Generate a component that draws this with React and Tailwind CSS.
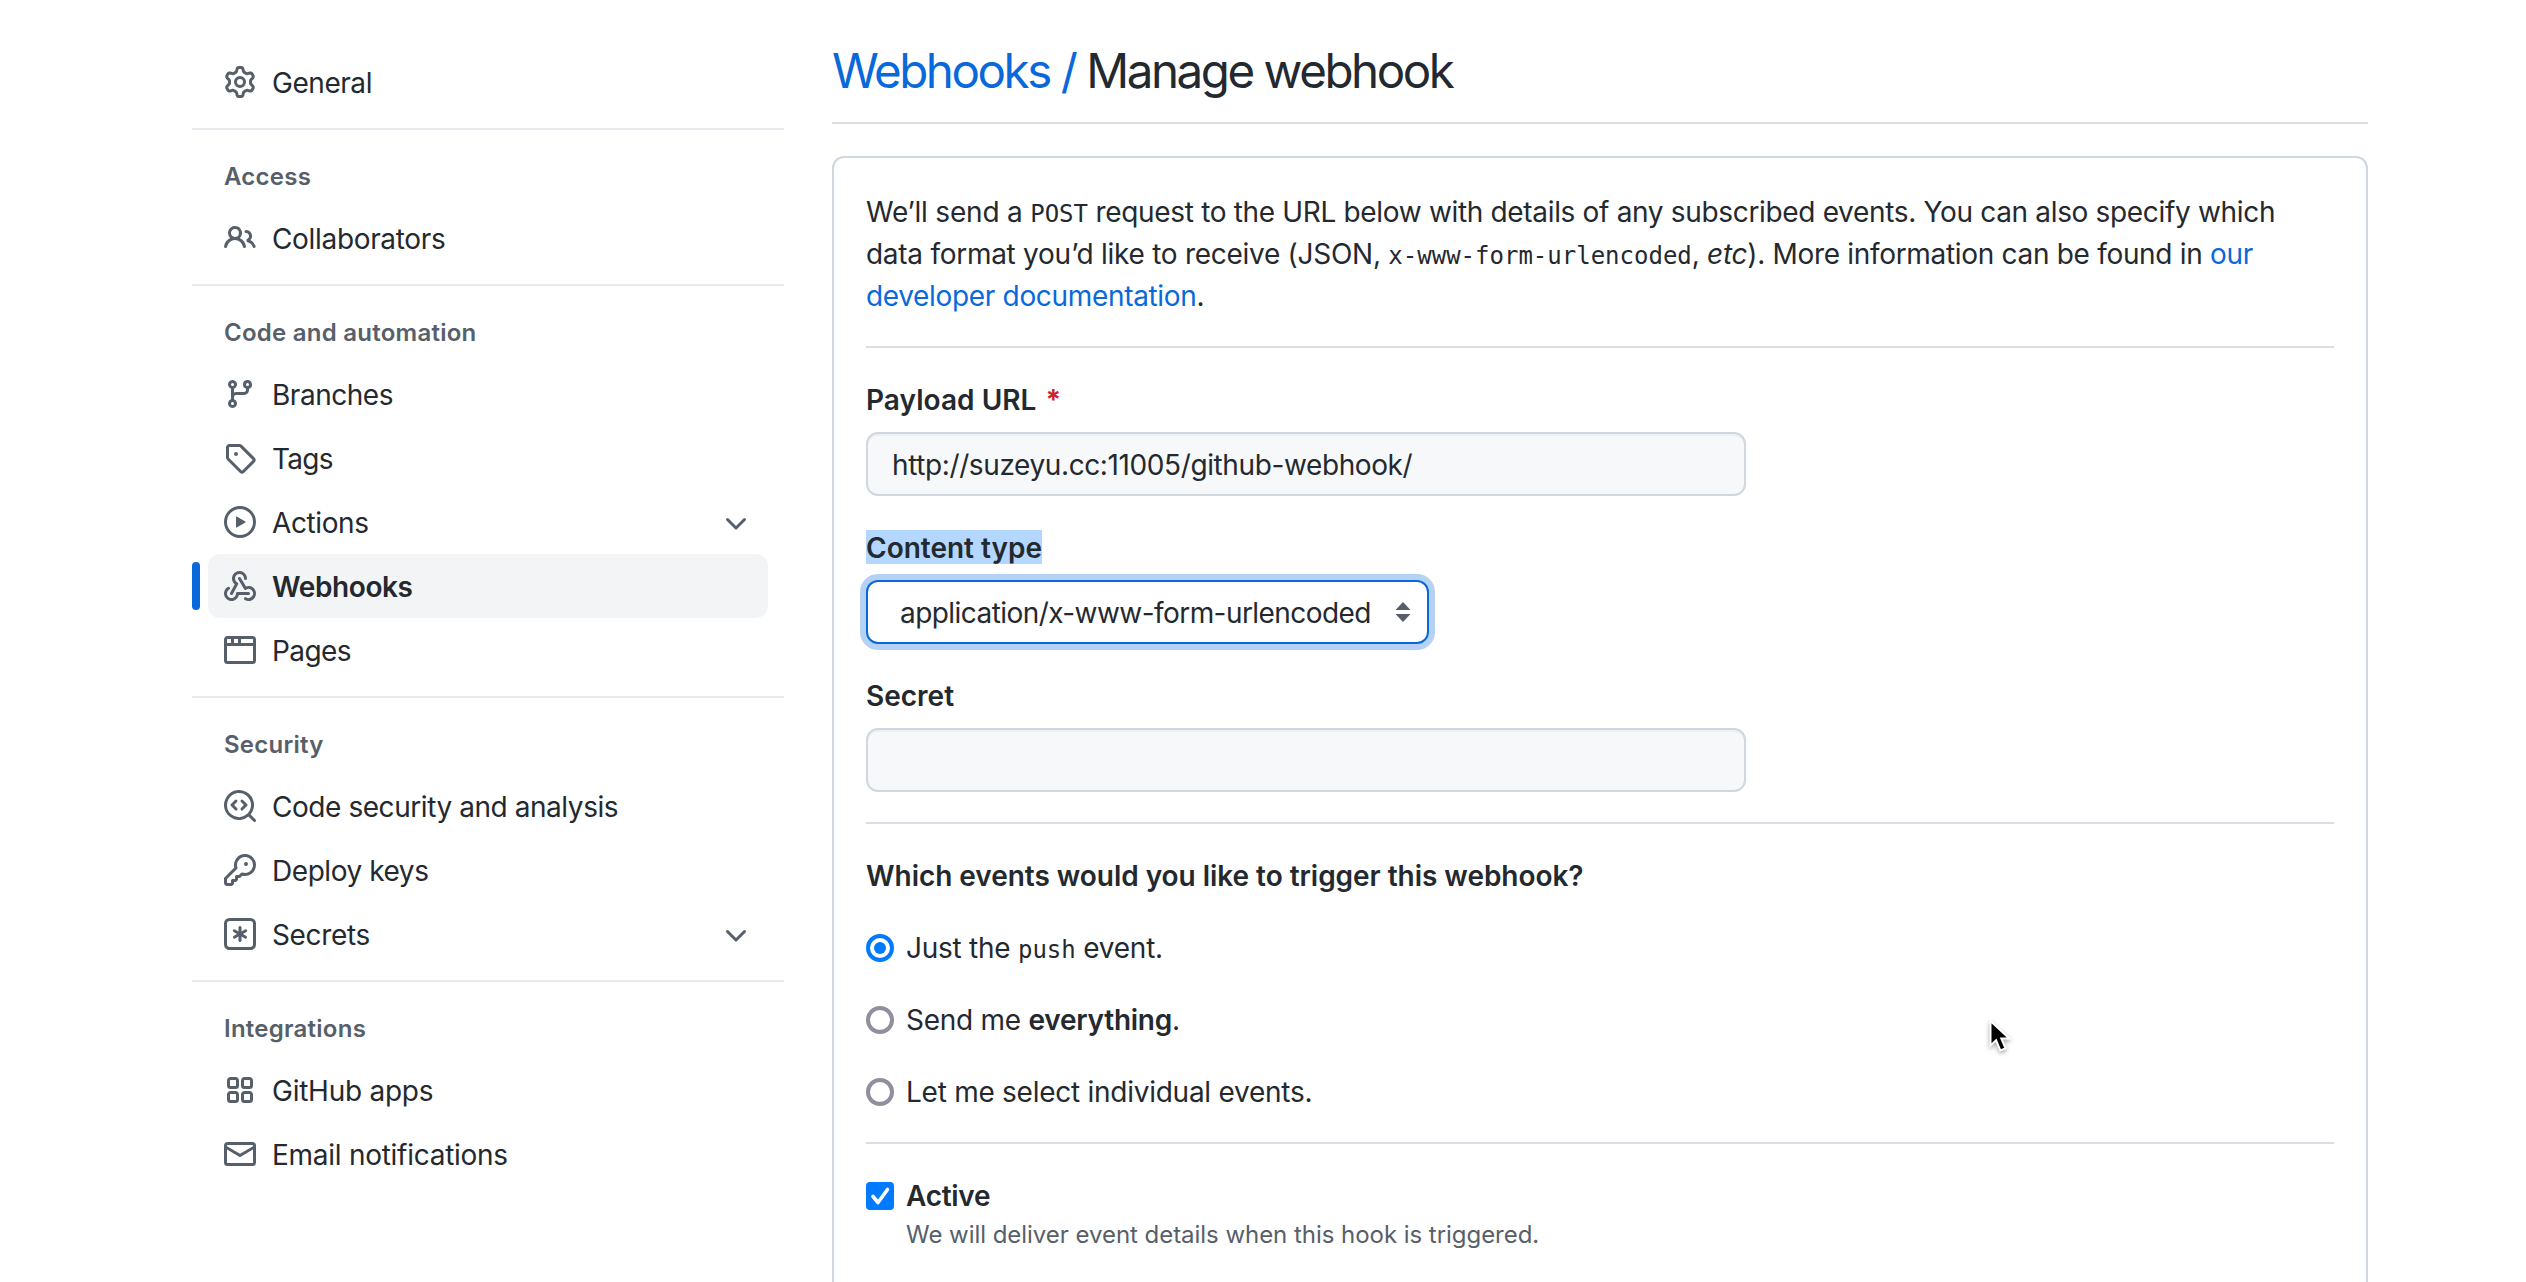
const ICONS = {
  gear: [
    'M8 0a8.2 8.2 0 0 1 .701.031C9.444.095 9.99.645 10.16 1.29l.288 1.107c.018.066.079.158.212.224.231.114.454.243.668.386.123.082.233.09.299.071l1.103-.303c.644-.176 1.392.021 1.82.63.27.385.506.792.704 1.218.315.675.111 1.422-.364 1.891l-.814.806c-.049.048-.098.147-.088.294.016.257.016.515 0 .772-.01.147.038.246.088.294l.814.806c.475.469.679 1.216.364 1.891a7.977 7.977 0 0 1-.704 1.217c-.428.61-1.176.807-1.82.63l-1.102-.302c-.067-.019-.177-.011-.3.071a5.909 5.909 0 0 1-.668.386c-.133.066-.194.158-.211.224l-.29 1.106c-.168.646-.715 1.196-1.458 1.26a8.006 8.006 0 0 1-1.402 0c-.743-.064-1.289-.614-1.458-1.26l-.289-1.106c-.018-.066-.079-.158-.212-.224a5.738 5.738 0 0 1-.668-.386c-.123-.082-.233-.09-.299-.071l-1.103.303c-.644.176-1.392-.021-1.82-.63a8.12 8.12 0 0 1-.704-1.218c-.315-.675-.111-1.422.363-1.891l.815-.806c.05-.048.098-.147.088-.294a6.214 6.214 0 0 1 0-.772c.01-.147-.038-.246-.088-.294l-.815-.806C.635 6.045.431 5.298.746 4.623a7.92 7.92 0 0 1 .704-1.217c.428-.61 1.176-.807 1.82-.63l1.102.302c.067.019.177.011.3-.071.214-.143.437-.272.668-.386.133-.066.194-.158.211-.224l.29-1.106C6.009.645 6.556.095 7.299.03 7.53.01 7.764 0 8 0Zm-.571 1.525c-.036.003-.108.036-.137.146l-.289 1.105c-.147.561-.549.967-.998 1.189-.173.086-.34.183-.5.29-.417.278-.97.423-1.529.27l-1.103-.303c-.109-.03-.175.016-.195.045-.22.312-.412.644-.573.99-.014.031-.021.11.059.19l.815.806c.411.406.562.957.53 1.456a4.709 4.709 0 0 0 0 .582c.032.499-.119 1.05-.53 1.456l-.815.806c-.081.08-.073.159-.059.19.162.346.353.677.573.989.02.03.085.076.195.046l1.102-.303c.56-.153 1.113-.008 1.53.27.161.107.328.204.501.29.447.222.85.629.997 1.189l.289 1.105c.029.109.101.143.137.146a6.6 6.6 0 0 0 1.142 0c.036-.003.108-.036.137-.146l.289-1.105c.147-.561.549-.967.998-1.189.173-.086.34-.183.5-.29.417-.278.97-.423 1.529-.27l1.103.303c.109.029.175-.016.195-.045.22-.313.411-.644.573-.99.014-.031.021-.11-.059-.19l-.815-.806c-.411-.406-.562-.957-.53-1.456a4.709 4.709 0 0 0 0-.582c-.032-.499.119-1.05.53-1.456l.815-.806c.081-.08.073-.159.059-.19a6.464 6.464 0 0 0-.573-.989c-.02-.03-.085-.076-.195-.046l-1.102.303c-.56.153-1.113.008-1.53-.27a4.44 4.44 0 0 0-.501-.29c-.447-.222-.85-.629-.997-1.189l-.289-1.105c-.029-.11-.101-.143-.137-.146a6.6 6.6 0 0 0-1.142 0ZM11 8a3 3 0 1 1-6 0 3 3 0 0 1 6 0ZM9.5 8a1.5 1.5 0 1 0-3.001.001A1.5 1.5 0 0 0 9.5 8Z',
  ],
  people: [
    'M2 5.5a3.5 3.5 0 1 1 5.898 2.549 5.508 5.508 0 0 1 3.034 4.084.75.75 0 1 1-1.482.235 4 4 0 0 0-7.9 0 .75.75 0 0 1-1.482-.236A5.507 5.507 0 0 1 3.102 8.05 3.493 3.493 0 0 1 2 5.5ZM11 4a3.001 3.001 0 0 1 2.22 5.018 5.01 5.01 0 0 1 2.56 3.012.749.749 0 0 1-.885.954.752.752 0 0 1-.549-.514 3.507 3.507 0 0 0-2.522-2.372.75.75 0 0 1-.574-.73v-.352a.75.75 0 0 1 .416-.672A1.5 1.5 0 0 0 11 5.5.75.75 0 0 1 11 4Zm-5.5-.5a2 2 0 1 0-.001 3.999A2 2 0 0 0 5.5 3.5Z',
  ],
  branch: [
    'M9.5 3.25a2.25 2.25 0 1 1 3 2.122V6A2.5 2.5 0 0 1 10 8.5H6a1 1 0 0 0-1 1v1.128a2.251 2.251 0 1 1-1.5 0V5.372a2.25 2.25 0 1 1 1.5 0v1.836A2.493 2.493 0 0 1 6 7h4a1 1 0 0 0 1-1v-.628A2.25 2.25 0 0 1 9.5 3.25Zm-6 0a.75.75 0 1 0 1.5 0 .75.75 0 0 0-1.5 0Zm8.25-.75a.75.75 0 1 0 0 1.5.75.75 0 0 0 0-1.5ZM4.25 12a.75.75 0 1 0 0 1.5.75.75 0 0 0 0-1.5Z',
  ],
  tag: [
    'M1 7.775V2.75C1 1.784 1.784 1 2.75 1h5.025c.464 0 .91.184 1.238.513l6.25 6.25a1.75 1.75 0 0 1 0 2.474l-5.026 5.026a1.75 1.75 0 0 1-2.474 0l-6.25-6.25A1.752 1.752 0 0 1 1 7.775Zm1.5 0c0 .066.026.13.073.177l6.25 6.25a.25.25 0 0 0 .354 0l5.025-5.025a.25.25 0 0 0 0-.354l-6.25-6.25a.25.25 0 0 0-.177-.073H2.75a.25.25 0 0 0-.25.25ZM6 5a1 1 0 1 1 0 2 1 1 0 0 1 0-2Z',
  ],
  play: [
    'M8 0a8 8 0 1 1 0 16A8 8 0 0 1 8 0ZM1.5 8a6.5 6.5 0 1 0 13 0 6.5 6.5 0 0 0-13 0Zm4.879-2.773 4.264 2.559a.25.25 0 0 1 0 .428l-4.264 2.559A.25.25 0 0 1 6 10.559V5.442a.25.25 0 0 1 .379-.215Z',
  ],
  webhook: [
    'M5.5 4.25a2.25 2.25 0 0 1 4.5 0 .75.75 0 0 0 1.5 0 3.75 3.75 0 1 0-6.14 2.889l-2.272 4.258a.75.75 0 0 0 1.324.706L7 7.25a.75.75 0 0 0-.309-1.015A2.25 2.25 0 0 1 5.5 4.25Z',
    'M7.364 3.607a.75.75 0 0 1 1.03.257l2.608 4.349a3.75 3.75 0 1 1-.628 6.785.75.75 0 0 1 .752-1.299 2.25 2.25 0 1 0-.033-3.88.75.75 0 0 1-1.03-.256L7.107 4.636a.75.75 0 0 1 .257-1.03Z',
    'M2.9 8.776A.75.75 0 0 1 2.625 9.8 2.25 2.25 0 1 0 6 11.75a.75.75 0 0 1 .75-.751h5.5a.75.75 0 0 1 0 1.5H7.425a3.751 3.751 0 1 1-5.55-3.998.75.75 0 0 1 1.024.274Z',
  ],
  browser: [
    'M0 2.75C0 1.784.784 1 1.75 1h12.5c.966 0 1.75.784 1.75 1.75v10.5A1.75 1.75 0 0 1 14.25 15H1.75A1.75 1.75 0 0 1 0 13.25ZM14.5 6h-13v7.25c0 .138.112.25.25.25h12.5a.25.25 0 0 0 .25-.25Zm-6-3.5v2h6V2.75a.25.25 0 0 0-.25-.25ZM5 2.5v2h2v-2Zm-3.25 0a.25.25 0 0 0-.25.25V4.5h2v-2Z',
  ],
  codescan: [
    'M8.47 4.97a.75.75 0 0 0 0 1.06L9.94 7.5 8.47 8.97a.75.75 0 1 0 1.06 1.06l2-2a.75.75 0 0 0 0-1.06l-2-2a.75.75 0 0 0-1.06 0ZM6.53 6.03a.75.75 0 0 0-1.06-1.06l-2 2a.75.75 0 0 0 0 1.06l2 2a.75.75 0 1 0 1.06-1.06L5.06 7.5l1.47-1.47Z',
    'M12.246 13.307a7.501 7.501 0 1 1 1.06-1.06l2.474 2.473a.749.749 0 1 1-1.06 1.06ZM1.5 7.5a6.002 6.002 0 0 0 3.608 5.504 6.002 6.002 0 0 0 6.486-1.117.748.748 0 0 1 .292-.293A6 6 0 1 0 1.5 7.5Z',
  ],
  key: [
    'M10.5 0a5.499 5.499 0 1 1-1.288 10.848l-.932.932a.749.749 0 0 1-.53.22H7v.75a.749.749 0 0 1-.22.53l-.5.5a.749.749 0 0 1-.53.22H5v.75a.749.749 0 0 1-.22.53l-.5.5a.749.749 0 0 1-.53.22h-2A1.75 1.75 0 0 1 0 14.25v-2c0-.199.079-.389.22-.53l4.932-4.932A5.5 5.5 0 0 1 10.5 0Zm-4 5.5c-.001.431.069.86.205 1.269a.75.75 0 0 1-.181.768L1.5 12.56v1.69c0 .138.112.25.25.25h1.69l.06-.06v-1.19a.75.75 0 0 1 .75-.75h1.19l.06-.06v-1.19a.75.75 0 0 1 .75-.75h1.19l1.023-1.025a.75.75 0 0 1 .768-.18A4 4 0 1 0 6.5 5.5ZM11 6a1 1 0 1 1 0-2 1 1 0 0 1 0 2Z',
  ],
  asterisk: [
    'M0 2.75A2.75 2.75 0 0 1 2.75 0h10.5A2.75 2.75 0 0 1 16 2.75v10.5A2.75 2.75 0 0 1 13.25 16H2.75A2.75 2.75 0 0 1 0 13.25ZM2.75 1.5c-.69 0-1.25.56-1.25 1.25v10.5c0 .69.56 1.25 1.25 1.25h10.5c.69 0 1.25-.56 1.25-1.25V2.75c0-.69-.56-1.25-1.25-1.25Z',
    'M8 4a.75.75 0 0 1 .75.75V6.7l1.69-.975a.75.75 0 0 1 .75 1.3L9.5 8l1.69.976a.75.75 0 0 1-.75 1.298L8.75 9.3v1.951a.75.75 0 0 1-1.5 0V9.299l-1.69.976a.75.75 0 0 1-.75-1.3L6.5 8l-1.69-.975a.75.75 0 0 1 .75-1.3l1.69.976V4.75A.75.75 0 0 1 8 4Z',
  ],
  apps: [
    'M1.5 3.25c0-.966.784-1.75 1.75-1.75h2.5c.966 0 1.75.784 1.75 1.75v2.5A1.75 1.75 0 0 1 5.75 7.5h-2.5A1.75 1.75 0 0 1 1.5 5.75ZM3.25 3a.25.25 0 0 0-.25.25v2.5c0 .138.112.25.25.25h2.5A.25.25 0 0 0 6 5.75v-2.5A.25.25 0 0 0 5.75 3Z',
    'M8.5 3.25c0-.966.784-1.75 1.75-1.75h2.5c.966 0 1.75.784 1.75 1.75v2.5a1.75 1.75 0 0 1-1.75 1.75h-2.5A1.75 1.75 0 0 1 8.5 5.75ZM10.25 3a.25.25 0 0 0-.25.25v2.5c0 .138.112.25.25.25h2.5a.25.25 0 0 0 .25-.25v-2.5a.25.25 0 0 0-.25-.25Z',
    'M1.5 10.25c0-.966.784-1.75 1.75-1.75h2.5c.966 0 1.75.784 1.75 1.75v2.5a1.75 1.75 0 0 1-1.75 1.75h-2.5a1.75 1.75 0 0 1-1.75-1.75ZM3.25 10a.25.25 0 0 0-.25.25v2.5c0 .138.112.25.25.25h2.5a.25.25 0 0 0 .25-.25v-2.5a.25.25 0 0 0-.25-.25Z',
    'M8.5 10.25c0-.966.784-1.75 1.75-1.75h2.5c.966 0 1.75.784 1.75 1.75v2.5a1.75 1.75 0 0 1-1.75 1.75h-2.5a1.75 1.75 0 0 1-1.75-1.75ZM10.25 10a.25.25 0 0 0-.25.25v2.5c0 .138.112.25.25.25h2.5a.25.25 0 0 0 .25-.25v-2.5a.25.25 0 0 0-.25-.25Z',
  ],
  mail: [
    'M1.75 2h12.5c.966 0 1.75.784 1.75 1.75v8.5A1.75 1.75 0 0 1 14.25 14H1.75A1.75 1.75 0 0 1 0 12.25v-8.5C0 2.784.784 2 1.75 2ZM1.5 12.251c0 .138.112.25.25.25h12.5a.25.25 0 0 0 .25-.25V5.809L8.38 9.397a.75.75 0 0 1-.76 0L1.5 5.809v6.442Zm13-8.181v-.32a.25.25 0 0 0-.25-.25H1.75a.25.25 0 0 0-.25.25v.32L8 7.88Z',
  ],
  chevron: [
    'M12.78 6.22a.749.749 0 0 1 0 1.06l-4.25 4.25a.749.749 0 0 1-1.06 0L3.22 7.28a.749.749 0 1 1 1.06-1.06L8 9.939l3.72-3.719a.749.749 0 0 1 1.06 0Z',
  ],
};

function Icon({ name }) {
  return (
    <svg viewBox="0 0 16 16" className="size-8 shrink-0 fill-[#57606a]">
      {ICONS[name].map((d) => (
        <path key={d} d={d} />
      ))}
    </svg>
  );
}

const SECTIONS = [
  { items: [{ icon: 'gear', label: 'General', track: 'tracking-[-0.45px]' }] },
  {
    title: 'Access',
    items: [{ icon: 'people', label: 'Collaborators', track: 'tracking-[-0.33px]' }],
  },
  {
    title: 'Code and automation',
    items: [
      { icon: 'branch', label: 'Branches', track: 'tracking-[-0.48px]' },
      { icon: 'tag', label: 'Tags', track: 'tracking-[-0.7px]' },
      { icon: 'play', label: 'Actions', track: 'tracking-[-0.4px]', expandable: true },
      { icon: 'webhook', label: 'Webhooks', track: 'tracking-[-0.4px]', active: true },
      { icon: 'browser', label: 'Pages', track: 'tracking-[-0.6px]' },
    ],
  },
  {
    title: 'Security',
    items: [
      { icon: 'codescan', label: 'Code security and analysis', track: 'tracking-[-0.44px]' },
      { icon: 'key', label: 'Deploy keys', track: 'tracking-[-0.44px]' },
      { icon: 'asterisk', label: 'Secrets', track: 'tracking-[-0.35px]', expandable: true },
    ],
  },
  {
    title: 'Integrations',
    items: [
      { icon: 'apps', label: 'GitHub apps', track: 'tracking-[-0.25px]' },
      { icon: 'mail', label: 'Email notifications', track: 'tracking-[-0.27px]' },
    ],
  },
];

function NavItem({ icon, label, track, active, expandable }) {
  return (
    <li className="flex h-16 items-center">
      <span className={active ? 'h-12 w-2 rounded-full bg-[#0969da]' : 'h-12 w-2'} />
      <a
        className={
          active
            ? 'ml-2 flex h-16 w-[560px] items-center gap-4 rounded-xl bg-[#f3f4f6] px-4 font-semibold'
            : 'ml-2 flex h-16 w-[560px] items-center gap-4 rounded-xl px-4'
        }
      >
        <Icon name={icon} />
        <span className={`flex-1 pt-0.5 ${track}`}>{label}</span>
        {expandable && <Icon name="chevron" />}
      </a>
    </li>
  );
}

function Sidebar() {
  return (
    <nav className="w-[592px] shrink-0 pt-[50px]">
      {SECTIONS.map(({ title, items }, i) => (
        <section key={i} className={i ? 'mt-3.5 border-t-2 border-[#e7ebef]' : ''}>
          {title && (
            <h3 className="flex h-[76px] items-center px-8 pt-[17px] text-2xl font-semibold tracking-[0.25px] text-[#57606a]">
              {title}
            </h3>
          )}
          <ul>
            {items.map((item) => (
              <NavItem key={item.label} {...item} />
            ))}
          </ul>
        </section>
      ))}
    </nav>
  );
}

function Code({ children }) {
  return (
    <code className="font-['DejaVu_Sans_Mono','Liberation_Mono',monospace] text-[24px] leading-none tracking-normal">
      {children}
    </code>
  );
}

function Rule({ className }) {
  return <hr className={`border-t-2 border-[#d8dee4] ${className}`} />;
}

function Radio({ checked, children }) {
  return (
    <div className="flex h-[72px] items-center gap-3 tracking-[-0.26px]">
      <span
        className={
          checked
            ? 'flex size-7 items-center justify-center rounded-full border-4 border-[#007aff]'
            : 'size-7 rounded-full border-4 border-[#8f8f9d]'
        }
      >
        {checked && <span className="size-3 rounded-full bg-[#007aff]" />}
      </span>
      <span>{children}</span>
    </div>
  );
}

const FIELD =
  'h-16 w-[880px] rounded-xl border-2 border-[#d0d7de] bg-[#f6f8fa] px-6 shadow-[inset_0_2px_0_rgba(208,215,222,0.2)]';

function Cursor() {
  return (
    <svg
      viewBox="0 0 24 36"
      className="absolute left-[1989px] top-[1019px] h-9 w-6 drop-shadow-[0_2px_2px_rgba(0,0,0,0.35)]"
    >
      <path
        d="M1.5 2v24.5l5.6-5.2 4.2 10.2 5.2-2.2-4.2-9.8h8z"
        className="fill-black stroke-white"
        strokeWidth="2"
        strokeLinejoin="miter"
      />
    </svg>
  );
}

export default function App() {
  return (
    <div className="relative flex h-[1282px] w-[2526px] gap-12 overflow-hidden bg-white pl-48 font-['Inter','Liberation_Sans',sans-serif] text-[28px] leading-[42px] text-[#24292f]">
      <Sidebar />
      <main className="w-[1536px] shrink-0">
        <h1 className="h-[124px] border-b-2 border-[#d8dee4] pt-[35px] text-[47.5px] font-normal leading-[72px] tracking-[-2.45px]">
          <span className="text-[#0969da]">Webhooks /</span> Manage webhook
        </h1>
        <div className="mt-8 h-[1200px] rounded-xl border-2 border-[#d0d7de] px-8 pt-8">
          <p className="h-[126px] whitespace-nowrap pt-px tracking-[-0.33px]">
            <span className="tracking-[-0.2px]">We’ll send a </span>
            <Code>POST</Code> request to the URL below with details of any subscribed events. You
            can also specify which
            <br />
            <span className="tracking-[-0.27px]">data format you’d like to receive (JSON, </span>
            <Code>x-www-form-urlencoded</Code>
            <span className="tracking-[-0.31px]">
              , <em>etc</em>). More information can be found in{' '}
              <a className="text-[#0969da]">our</a>
            </span>
            <br />
            <a className="text-[#0969da]">developer documentation</a>.
          </p>
          <Rule className="mt-[30px]" />

          <label className="mt-[31px] block font-semibold tracking-[0.05px]">
            Payload URL <span className="ml-0.5 font-bold text-[#cf222e]">*</span>
          </label>
          <div className={`mt-[11px] flex items-center tracking-[-0.39px] ${FIELD}`}>
            <span className="pt-0.5">http://suzeyu.cc:11005/github-webhook/</span>
          </div>

          <label className="mt-[31px] flex h-[42px] items-center font-semibold">
            <span className="-mt-0.5 bg-[#b3d7ff] pt-0.5 leading-8">Content type</span>
          </label>
          <div className="mt-[11px] flex h-16 w-[563px] items-center justify-between rounded-xl border-2 border-[#0969da] bg-white pl-8 pr-4 tracking-[-0.56px] shadow-[0_0_0_6px_rgba(9,105,218,0.3)]">
            <span className="whitespace-nowrap pt-0.5">application/x-www-form-urlencoded</span>
            <svg viewBox="0 0 16 20" className="h-5 w-4 fill-[#57606a]">
              <path d="M8 0l7.5 8H.5zM8 20l7.5-8H.5z" />
            </svg>
          </div>

          <label className="mt-[31px] block font-semibold">Secret</label>
          <div className={`mt-[11px] ${FIELD}`} />
          <Rule className="mt-[30px]" />

          <h2 className="mb-[15px] mt-[31px] font-semibold tracking-[-0.04px]">
            Which events would you like to trigger this webhook?
          </h2>
          <Radio checked>
            Just the <Code>push</Code> event.
          </Radio>
          <Radio>
            Send me <b className="font-semibold">everything</b>.
          </Radio>
          <Radio>Let me select individual events.</Radio>
          <Rule className="mt-3.5" />

          <div className="mt-[31px] flex gap-3">
            <span className="mt-[7px] flex size-7 items-center justify-center rounded bg-[#007aff]">
              <svg viewBox="0 0 28 28" className="size-7 fill-none stroke-white">
                <path
                  d="M7 14.5l5 6L21.5 7.5"
                  strokeWidth="3.6"
                  strokeLinecap="round"
                  strokeLinejoin="round"
                />
              </svg>
            </span>
            <div>
              <div className="font-semibold tracking-[-0.3px]">Active</div>
              <p className="text-2xl leading-9 tracking-[-0.04px] text-[#57606a]">
                We will deliver event details when this hook is triggered.
              </p>
            </div>
          </div>
        </div>
      </main>
      <Cursor />
    </div>
  );
}
